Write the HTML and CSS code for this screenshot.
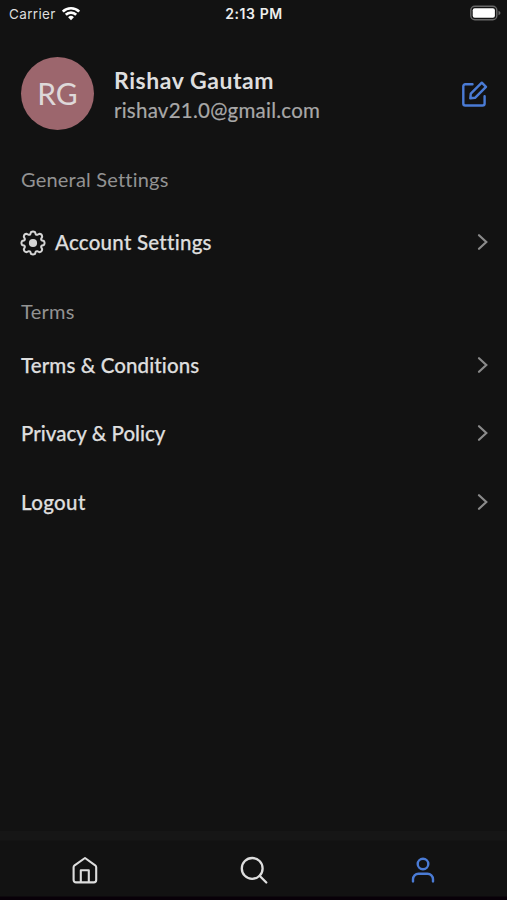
FILE: index.html
```html
<!DOCTYPE html>
<html lang="en">
<head>
<meta charset="utf-8">
<title>Profile</title>
<link rel="stylesheet" href="styles.css">
</head>
<body>
<div class="screen">
  <header class="status">
    <div class="carrier"><span class="carrier-name">Carrier</span>
      <svg class="wifi" width="20" height="15" viewBox="0 0 20 15" fill="none" stroke="#fff" stroke-width="2.7"><path d="M1.8 5.6a11.7 11.7 0 0 1 16.4 0M4.8 8.8a7.4 7.4 0 0 1 10.4 0"/><path d="M10 14.2 7.1 11.2a4.2 4.2 0 0 1 5.8 0z" fill="#fff" stroke="none"/></svg>
    </div>
    <span class="clock">2:13 PM</span>
    <svg class="battery" width="31" height="16" viewBox="0 0 31 16"><rect x=".8" y="1.3" width="26" height="13.4" rx="4" fill="none" stroke="#686868" stroke-width="1.4"/><rect x="2.7" y="3.2" width="22.2" height="9.6" rx="2" fill="#fff"/><path d="M28.5 5.7q2 .8 2 2.3t-2 2.3z" fill="#686868"/></svg>
  </header>
  <main>
    <section class="profile">
      <div class="avatar"><span class="initials">RG</span></div>
      <div class="identity">
        <span class="name">Rishav Gautam</span>
        <span class="email">rishav21.0@gmail.com</span>
      </div>
      <svg class="edit" width="28" height="28" viewBox="0 0 28 28" fill="none" stroke="#4a7bd5" stroke-width="2.4" stroke-linecap="round" stroke-linejoin="round"><path d="M11.5 4.2H4.3a2 2 0 0 0-2 2v17.3a2 2 0 0 0 2 2h17.3a2 2 0 0 0 2-2v-7.2"/><path d="M20.8 2.7 25 6.9 14 17.8 9.3 18.3 9.8 13.7z"/></svg>
    </section>
    <h2 class="general">General Settings</h2>
    <div class="row account">
      <svg class="gear" width="26" height="26" viewBox="-13 -13 26 26"><path fill="none" stroke="#d5d5d5" stroke-width="2" stroke-linejoin="round" d="M-2-10.9Q0-12.2 2-10.9L2.8-8.5Q3.5-8 4.2-8.2L6.3-9.2Q9-9 9.2-6.3L8.2-4.2Q8-3.5 8.5-2.8L10.9-2Q12.2 0 10.9 2L8.5 2.8Q8 3.5 8.2 4.2L9.2 6.3Q9 9 6.3 9.2L4.2 8.2Q3.5 8 2.8 8.5L2 10.9Q0 12.2-2 10.9L-2.8 8.5Q-3.5 8-4.2 8.2L-6.3 9.2Q-9 9-9.2 6.3L-8.2 4.2Q-8 3.5-8.5 2.8L-10.9 2Q-12.2 0-10.9-2L-8.5-2.8Q-8-3.5-8.2-4.2L-9.2-6.3Q-9-9-6.3-9.2L-4.2-8.2Q-3.5-8-2.8-8.5Z"/><circle r="4.1" fill="#d5d5d5"/></svg>
      <span class="label t-account">Account Settings</span>
      <svg class="chevron" width="12" height="18" viewBox="0 0 12 18"><path d="m2 2.2 7.3 6.8L2 15.8"/></svg>
    </div>
    <h2 class="terms">Terms</h2>
    <div class="row"><span class="label t-terms">Terms &amp; Conditions</span><svg class="chevron" width="12" height="18" viewBox="0 0 12 18"><path d="m2 2.2 7.3 6.8L2 15.8"/></svg></div>
    <div class="row"><span class="label t-privacy">Privacy &amp; Policy</span><svg class="chevron" width="12" height="18" viewBox="0 0 12 18"><path d="m2 2.2 7.3 6.8L2 15.8"/></svg></div>
    <div class="row"><span class="label t-logout">Logout</span><svg class="chevron" width="12" height="18" viewBox="0 0 12 18"><path d="m2 2.2 7.3 6.8L2 15.8"/></svg></div>
  </main>
  <nav class="tabs">
    <svg width="28" height="30" viewBox="0 0 28 30" fill="none" stroke="#ddd" stroke-width="2.1" stroke-linejoin="round"><path d="M14 3 24.2 10.3q1 .8 1 2V25a2.4 2.4 0 0 1-2.4 2.4H5A2.4 2.4 0 0 1 2.6 25V12.3q0-1.2 1-2z"/><path d="M9.8 27V15.3h8V27"/></svg>
    <svg width="28" height="30" viewBox="0 0 28 30" fill="none" stroke="#ddd" stroke-width="2.3" stroke-linecap="round"><circle cx="12.2" cy="13.4" r="10.4"/><path d="m19.8 21 6.5 6.5"/></svg>
    <svg width="28" height="30" viewBox="0 0 28 30" fill="none" stroke="#4a7bd5" stroke-width="2.4" stroke-linecap="round"><circle cx="14" cy="9" r="5.3"/><path d="M4 26.4v-2.2a5.5 5.5 0 0 1 5.5-5.5h9a5.5 5.5 0 0 1 5.5 5.5v2.2"/></svg>
  </nav>
</div>
</body>
</html>
```
FILE: styles.css
```css
* { box-sizing: border-box; }
body { margin: 0; background: #121212; color: #dedede; font-family: Lato, "Liberation Sans", sans-serif; }
.screen { height: 900px; display: flex; flex-direction: column; overflow: hidden; }
.status { height: 28px; flex: none; padding: 0 6px 0 9px; display: grid; grid-template-columns: 1fr auto 1fr; align-items: center; font-family: Inter, sans-serif; }
.carrier { display: flex; align-items: center; gap: 5px; color: #ddd; font-size: 13.5px; }
.carrier-name { letter-spacing: .35px; }
.wifi { position: relative; top: -1px; }
.clock { margin: -2px 2px 0 0; font-size: 14px; font-weight: 600; color: #eee; letter-spacing: .6px; }
.battery { justify-self: end; position: relative; top: -1px; }
main { flex: 1; padding: 29px 18px 0 21px; }
.profile { height: 73px; display: flex; align-items: center; }
.avatar { width: 73px; height: 73px; border-radius: 50%; background: #9c666d; display: grid; place-items: center; font-size: 30px; color: #ded8d9; }
.initials { line-height: 34px; margin-top: -1px; }
.identity { flex: 1; margin: 3px 0 0 20px; display: flex; flex-direction: column; white-space: nowrap; }
.name { font-size: 23px; line-height: 30px; font-weight: 700; letter-spacing: .55px; }
.email { font-size: 20.5px; line-height: 30px; color: #a8a8a8; letter-spacing: .24px; -webkit-text-stroke: .2px currentColor; }
.edit { margin-right: 0; }
h2 { margin: 0; font-size: 20px; line-height: 30px; font-weight: 400; color: #929292; letter-spacing: .2px; }
.general { margin-top: 34px; }
.row { height: 68.5px; display: flex; align-items: center; justify-content: space-between; }
.account { margin: 14px 0 19px; }
.gear { margin-left: -1px; margin-right: 9px; flex: none; position: relative; top: 1px; }
.label { flex: 1; font-size: 20.5px; line-height: 30px; font-weight: 500; white-space: nowrap; -webkit-text-stroke: .25px currentColor; }
.t-account { letter-spacing: .25px; }
.t-terms { letter-spacing: .1px; }
.t-privacy { letter-spacing: .02px; }
.t-logout { letter-spacing: .35px; }
.chevron { fill: none; stroke: #8a8a8a; stroke-width: 2.2; stroke-linecap: round; }
.terms { margin-bottom: 5px; letter-spacing: .3px; }
.tabs { height: 69px; flex: none; padding: 24px 0 0 1px; display: grid; grid-template-columns: repeat(3, 1fr); justify-items: center; background: linear-gradient(#161616 9px, #121212 10px, #121212 65px, #080008 66px); }
```
